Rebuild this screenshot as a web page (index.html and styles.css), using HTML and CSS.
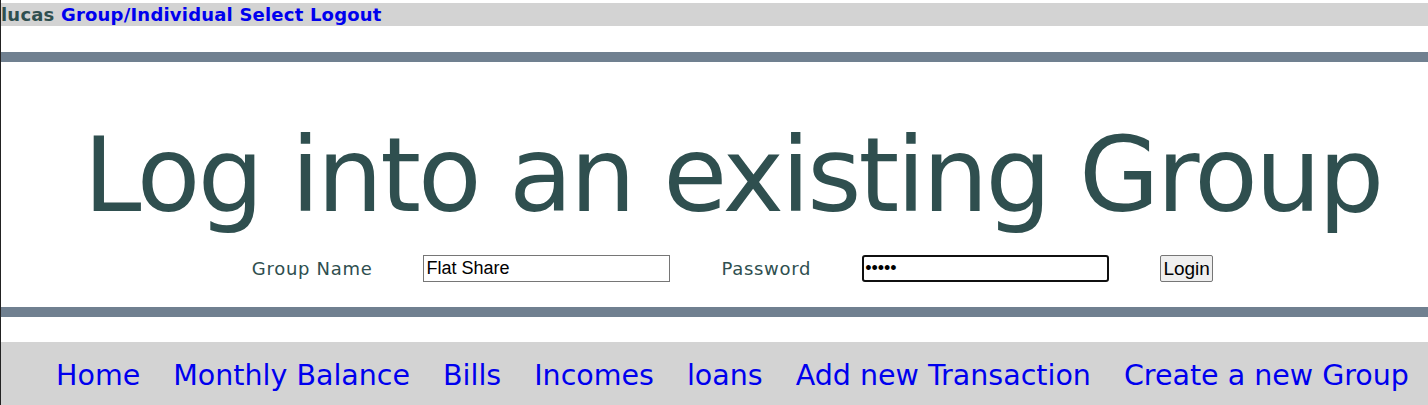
FILE: index.html
```html
<!DOCTYPE html>
<html>
<head>
<meta charset="utf-8">
<title>Log into an existing Group</title>
<link rel="stylesheet" href="styles.css">
</head>
<body>
<div class="page">
  <div class="userbar">
    <span class="user">lucas</span>
    <a href="#">Group/Individual Select</a>
    <a href="#">Logout</a>
  </div>
  <div class="rule rule-top"></div>
  <div class="content">
    <h1 class="title">Log into an existing Group</h1>
    <form class="login-form">
      <label class="field-label" for="gname">Group Name</label>
      <input class="text-input" id="gname" type="text" value="Flat Share">
      <label class="field-label" for="gpass">Password</label>
      <input class="text-input focused" id="gpass" type="password" value="12345">
      <button class="login-btn" type="button">Login</button>
    </form>
  </div>
  <div class="rule rule-bottom"></div>
  <nav class="navbar">
    <a href="#">Home</a>
    <a href="#">Monthly Balance</a>
    <a href="#">Bills</a>
    <a href="#">Incomes</a>
    <a href="#">loans</a>
    <a href="#">Add new Transaction</a>
    <a href="#">Create a new Group</a>
  </nav>
</div>
</body>
</html>
```
FILE: styles.css
```css
html, body {
  margin: 0;
  padding: 0;
  background: #ffffff;
  overflow: hidden;
}
body {
  font-family: "DejaVu Sans", "Lucida Grande", sans-serif;
  height: 405px;
  border-left: 1px solid #222222;
  box-sizing: border-box;
}
.page {
  padding-top: 3px;
}
.userbar {
  background: #d3d3d3;
  height: 23px;
  line-height: 23px;
  font-size: 18px;
  letter-spacing: 0.2px;
  font-weight: bold;
  white-space: nowrap;
}
.userbar .user {
  color: #2f4f4f;
}
.userbar a {
  color: #0000ee;
  text-decoration: none;
}
.rule {
  background: #708090;
  height: 10px;
}
.rule-top {
  margin-top: 26px;
}
.content {
  padding-left: 36px;
  height: 245px;
  display: flex;
  flex-direction: column;
  align-items: center;
}
.title {
  margin: 0;
  margin-top: 58px;
  font-weight: normal;
  font-size: 104px;
  line-height: 110px;
  letter-spacing: -2.85px;
  color: #2f4f4f;
  white-space: nowrap;
}
.login-form {
  display: flex;
  align-items: center;
  gap: 51px;
  margin-top: 25px;
}
.field-label {
  font-size: 18px;
  letter-spacing: 0.7px;
  color: #2f4f4f;
}
.text-input {
  width: 247px;
  height: 27px;
  box-sizing: border-box;
  border: 1px solid #767676;
  padding: 0 2px;
  font-family: "Liberation Sans", Arial, sans-serif;
  font-size: 18px;
  color: #000;
  border-radius: 0;
}
.text-input.focused {
  border: 2px solid #101010;
  border-radius: 3px;
  padding: 0 1px;
}
.login-btn {
  width: 53px;
  height: 27px;
  box-sizing: border-box;
  padding: 0;
  font-family: "Liberation Sans", Arial, sans-serif;
  font-size: 19px;
  color: #000;
  background: #efefef;
  border: 1px solid #767676;
  border-radius: 2px;
}
.navbar {
  margin-top: 25px;
  background: #d3d3d3;
  height: 80px;
  padding-left: 36px;
  display: flex;
  justify-content: center;
  gap: 33px;
  padding-top: 14px;
  box-sizing: border-box;
}
.navbar a {
  color: #0000ee;
  text-decoration: none;
  font-size: 28.5px;
  line-height: 40px;
  white-space: nowrap;
}
```
